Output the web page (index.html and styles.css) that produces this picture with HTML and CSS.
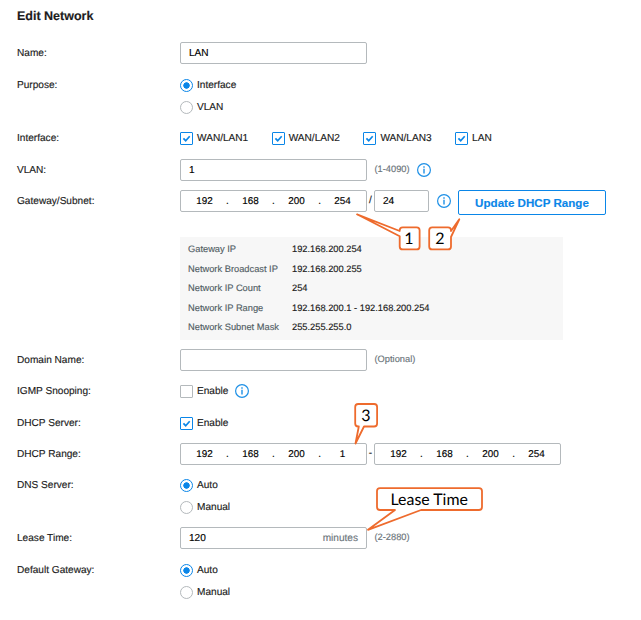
FILE: index.html
```html
<!DOCTYPE html>
<html lang="en">
<head>
<meta charset="utf-8">
<title>Edit Network</title>
<link rel="stylesheet" href="styles.css">
</head>
<body>
<svg class="symbols" width="0" height="0" aria-hidden="true">
  <symbol id="info" viewBox="0 0 14 14"><circle cx="7" cy="7" r="6.4" fill="none" stroke="currentColor" stroke-width="1.2"/><path d="M7 5.8v4.8M7 3.2v1.5" fill="none" stroke="currentColor" stroke-width="1.4"/></symbol>
  <symbol id="check" viewBox="0 0 11 11"><path d="M2.4 5.3l2.3 2.4 4-4.4" fill="none" stroke="currentColor" stroke-width="1.7"/></symbol>
</svg>
<main class="form">
  <h1 class="title">Edit Network</h1>

  <div class="row"><div class="label">Name:</div><div class="line"><div class="field">LAN</div></div></div>

  <div class="row gap-more"><div class="label">Purpose:</div><div class="options">
    <div class="line"><span class="radio on"></span><span class="caption">Interface</span></div>
    <div class="line"><span class="radio"></span><span class="caption">VLAN</span></div>
  </div></div>

  <div class="row"><div class="label">Interface:</div><div class="line ports">
    <span class="port"><svg class="box on"><use href="#check"/></svg><span class="caption">WAN/LAN1</span></span>
    <span class="port"><svg class="box on"><use href="#check"/></svg><span class="caption">WAN/LAN2</span></span>
    <span class="port"><svg class="box on"><use href="#check"/></svg><span class="caption">WAN/LAN3</span></span>
    <span class="port"><svg class="box on"><use href="#check"/></svg><span class="caption">LAN</span></span>
  </div></div>

  <div class="row gap-more"><div class="label">VLAN:</div><div class="line"><div class="field">1</div><span class="hint">(1-4090)</span><svg class="info"><use href="#info"/></svg></div></div>

  <div class="row"><div class="label">Gateway/Subnet:</div><div class="line">
    <div class="field ip"><b>192</b><i>.</i><b>168</b><i>.</i><b>200</b><i>.</i><b>254</b></div><span class="sep">/</span><div class="field mask">24</div><svg class="info after-mask"><use href="#info"/></svg><button class="update">Update DHCP Range</button>
  </div></div>

  <dl class="summary">
    <dt>Gateway IP</dt><dd>192.168.200.254</dd>
    <dt>Network Broadcast IP</dt><dd>192.168.200.255</dd>
    <dt>Network IP Count</dt><dd>254</dd>
    <dt>Network IP Range</dt><dd>192.168.200.1 - 192.168.200.254</dd>
    <dt>Network Subnet Mask</dt><dd>255.255.255.0</dd>
  </dl>

  <div class="row"><div class="label">Domain Name:</div><div class="line"><div class="field"></div><span class="hint">(Optional)</span></div></div>

  <div class="row"><div class="label">IGMP Snooping:</div><div class="line"><svg class="box"></svg><span class="caption">Enable</span><svg class="info"><use href="#info"/></svg></div></div>

  <div class="row gap-more"><div class="label">DHCP Server:</div><div class="line"><svg class="box on"><use href="#check"/></svg><span class="caption">Enable</span></div></div>

  <div class="row"><div class="label">DHCP Range:</div><div class="line">
    <div class="field ip"><b>192</b><i>.</i><b>168</b><i>.</i><b>200</b><i>.</i><b>1</b></div><span class="sep">-</span><div class="field ip"><b>192</b><i>.</i><b>168</b><i>.</i><b>200</b><i>.</i><b>254</b></div>
  </div></div>

  <div class="row"><div class="label">DNS Server:</div><div class="options">
    <div class="line"><span class="radio on"></span><span class="caption">Auto</span></div>
    <div class="line"><span class="radio"></span><span class="caption">Manual</span></div>
  </div></div>

  <div class="row"><div class="label">Lease Time:</div><div class="line"><div class="field">120<span class="unit">minutes</span></div><span class="hint">(2-2880)</span></div></div>

  <div class="row gap-more"><div class="label">Default Gateway:</div><div class="options">
    <div class="line"><span class="radio on"></span><span class="caption">Auto</span></div>
    <div class="line"><span class="radio"></span><span class="caption">Manual</span></div>
  </div></div>
</main>

<svg class="callouts" viewBox="0 0 641 620">
  <g class="bubble">
    <path d="M402.7 227.3H416.6Q419.6 227.3 419.6 230.3V246.4Q419.6 249.4 416.6 249.4H402.7Q399.7 249.4 399.7 246.4V236.3L357 214.3L399.7 231V230.3Q399.7 227.3 402.7 227.3Z"/>
    <path d="M432.2 227.3H448Q451 227.3 451 230.3V231L459.3 219.3L451 237V246.4Q451 249.4 448 249.4H432.2Q429.2 249.4 429.2 246.4V230.3Q429.2 227.3 432.2 227.3Z"/>
    <path d="M358.2 404H374.1Q377.1 404 377.1 407V423.5Q377.1 426.5 374.1 426.5H364L355.5 443.5L358.8 426.5H358.2Q355.2 426.5 355.2 423.5V407Q355.2 404 358.2 404Z"/>
    <path d="M380 488.1H479Q482 488.1 482 491.1V507Q482 510 479 510H421L368 529.8L395 510H380Q377 510 377 507V491.1Q377 488.1 380 488.1Z"/>
  </g>
  <g class="bubble-text">
    <text x="409" y="244">1</text>
    <text x="440" y="244">2</text>
    <text x="366" y="421">3</text>
    <text x="429.2" y="504.8" class="wide">Lease Time</text>
  </g>
</svg>
</body>
</html>
```
FILE: styles.css
```css
* { box-sizing: border-box; }
body {
  margin: 0;
  background: #fff;
  color: #1c1c1c;
  font: 10.1px/22px "Liberation Sans", Arial, sans-serif;
  text-rendering: geometricPrecision;
  -webkit-text-stroke: 0.15px currentColor;
}
.symbols { position: absolute; }
.form {
  display: flex;
  flex-direction: column;
  gap: 9px;
  padding: 5px 35px 0 17px;
}
.title {
  margin: 0 0 6px;
  font-size: 12.5px;
  line-height: 22px;
  font-weight: bold;
}
.row { display: grid; grid-template-columns: 163px 1fr; }
.gap-more { margin-top: 1px; }
.label { height: 22px; line-height: 23px; }
.line { display: flex; align-items: center; height: 22px; }
.caption { padding-top: 1px; line-height: 21px; }
.field {
  display: flex;
  align-items: center;
  flex: none;
  width: 187px;
  height: 22px;
  padding: 1px 8px 0 8px;
  border: 1px solid #b4b9bc;
  border-radius: 2px;
  background: #fff;
  color: #000;
  line-height: 20px;
}
.ip { padding: 1px 8px 0; font-size: 9.9px; }
.ip b { width: 31px; font-weight: normal; text-align: center; }
.ip i { width: 15.2px; font-style: normal; text-align: center; }
.mask { width: 55px; }
.sep { width: 7px; text-align: center; line-height: 20px; }
.unit { margin-left: auto; color: #6c757b; }
.hint { margin-left: 7.5px; font-size: 9.3px; line-height: 20px; color: #6c757b; height: 22px; }
.info { flex: none; width: 14px; height: 14px; margin-left: 7px; color: #1e90e6; }
.after-mask { margin-left: 8px; }
.radio {
  flex: none;
  width: 13px;
  height: 13px;
  margin-right: 4px;
  border: 1px solid #b4b9bc;
  border-radius: 50%;
}
.radio.on {
  border-color: #0a86e8;
  background: radial-gradient(circle, #0a86e8 2.9px, #fff 3.5px);
}
.box {
  flex: none;
  width: 13px;
  height: 13px;
  margin-right: 4px;
  border: 1px solid #b4b9bc;
  border-radius: 1px;
  color: #0a86e8;
}
.box.on { border-color: #0a86e8; }
.port { display: flex; align-items: center; width: 91.7px; }
.update {
  flex: none;
  align-self: flex-start;
  width: 148px;
  height: 25px;
  margin-left: 7px;
  padding: 0;
  border: 1px solid #0a86e8;
  border-radius: 2px;
  background: #fff;
  color: #0a86e8;
  font: bold 11.6px/23px "Liberation Sans", Arial, sans-serif;
}
.summary {
  display: grid;
  grid-template-columns: 104px 1fr;
  grid-auto-rows: 19.5px;
  width: 383px;
  height: 103px;
  margin: 16px 0 0 163px;
  padding: 3px 8px 0;
  background: #f7f7f7;
  font-size: 9.3px;
  line-height: 19.5px;
}
.summary dt { color: #535f66; }
.summary dd { margin: 0; }
.callouts {
  position: absolute;
  top: 0;
  left: 0;
  width: 641px;
  height: 620px;
  pointer-events: none;
}
.bubble { fill: #fff; stroke: #ee6b2d; stroke-width: 1.8; stroke-linejoin: round; }
.bubble-text {
  fill: #000;
  font: 16px Lato, Carlito, Calibri, sans-serif;
  text-anchor: middle;
  -webkit-text-stroke: 0;
}
.bubble-text .wide { font-size: 15.9px; }
```
